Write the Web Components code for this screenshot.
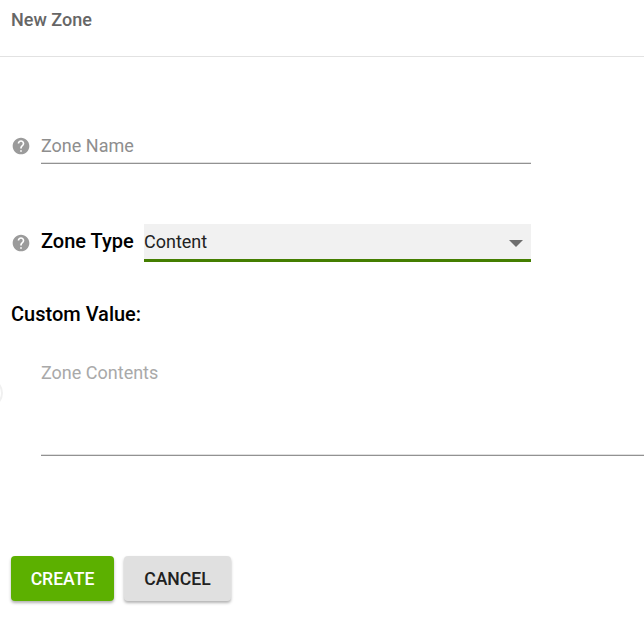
<!DOCTYPE html>
<html>
<head>
<meta charset="utf-8">
<title>New Zone</title>
<style>
    html, body { margin: 0; background: #fff; overflow: hidden; }
    body { font-family: Roboto, "Liberation Sans", sans-serif; }
</style>
</head>
<body>
<zone-dialog heading="New Zone"></zone-dialog>
<script>
class HelpIcon extends HTMLElement {
    constructor() {
        super();
        this.attachShadow({ mode: 'open' });
    }

    connectedCallback() {
        this.shadowRoot.innerHTML = `
        <style>
            :host { display: block; width: 20px; height: 20px; flex: none; }
            svg { display: block; width: 20px; height: 20px; fill: #9b9b9b; }
        </style>
        <svg viewBox="0 0 24 24"><path d="M12 2C6.48 2 2 6.48 2 12s4.48 10 10 10 10-4.48 10-10S17.52 2 12 2zm1 17h-2v-2h2v2zm2.07-7.75l-.9.92C13.45 12.9 13 13.5 13 15h-2v-.5c0-1.1.45-2.1 1.17-2.83l1.24-1.26c.37-.36.59-.86.59-1.41 0-1.1-.9-2-2-2s-2 .9-2 2H8c0-2.21 1.79-4 4-4s4 1.79 4 4c0 .88-.36 1.68-.93 2.25z"/></svg>
    `;
    }
}
customElements.define('help-icon', HelpIcon);

class TextField extends HTMLElement {
    constructor() {
        super();
        this.attachShadow({ mode: 'open' });
    }

    connectedCallback() {
        this.shadowRoot.innerHTML = `
        <style>
            :host { display: flex; align-items: center; gap: 10px; height: 36px; }
            .line {
                width: 490px;
                height: 35px;
                border-bottom: 1px solid #929292;
                box-shadow: inset 0 -1px 0 #e0e0e0;
                font-size: 18px;
                line-height: 35px;
                color: #8e8e8e;
            }
        </style>
        <help-icon></help-icon>
        <div class="line">${this.getAttribute('placeholder')}</div>
    `;
    }
}
customElements.define('text-field', TextField);

class SelectField extends HTMLElement {
    constructor() {
        super();
        this.attachShadow({ mode: 'open' });
    }

    connectedCallback() {
        this.shadowRoot.innerHTML = `
        <style>
            :host { display: flex; align-items: center; height: 38px; }
            help-icon { margin-right: 10px; }
            label { width: 103px; padding-bottom: 4px; font-size: 20px; font-weight: 500; color: #000; }
            .box {
                width: 387px;
                height: 35px;
                display: flex;
                align-items: center;
                justify-content: space-between;
                background: #f1f1f1;
                border-bottom: 3px solid #447e00;
                font-size: 18px;
                color: #222;
            }
            .arrow {
                width: 0;
                height: 0;
                margin: 4px 8px 0 0;
                border-left: 7px solid transparent;
                border-right: 7px solid transparent;
                border-top: 7px solid #6e6e6e;
            }
        </style>
        <help-icon></help-icon>
        <label>${this.getAttribute('label')}</label>
        <div class="box"><span>${this.getAttribute('value')}</span><span class="arrow"></span></div>
    `;
    }
}
customElements.define('select-field', SelectField);

class AreaField extends HTMLElement {
    constructor() {
        super();
        this.attachShadow({ mode: 'open' });
    }

    connectedCallback() {
        this.shadowRoot.innerHTML = `
        <style>
            :host { display: block; position: relative; padding-left: 41px; }
            .area {
                height: 100px;
                padding-top: 5px;
                border-bottom: 1px solid #929292;
                box-shadow: inset 0 -1px 0 #e0e0e0;
                font-size: 18px;
                line-height: 35px;
                color: #a9a9a9;
            }
            .edge {
                position: absolute;
                left: -27px;
                top: 28px;
                width: 26px;
                height: 26px;
                border: 2px solid #f0f0f0;
                border-radius: 50%;
            }
        </style>
        <div class="edge"></div>
        <div class="area">${this.getAttribute('placeholder')}</div>
    `;
    }
}
customElements.define('area-field', AreaField);

class ActionButton extends HTMLElement {
    constructor() {
        super();
        this.attachShadow({ mode: 'open' });
    }

    connectedCallback() {
        const primary = this.hasAttribute('primary');
        this.shadowRoot.innerHTML = `
        <style>
            :host { display: block; }
            button {
                display: block;
                width: ${primary ? '103px' : '107px'};
                height: 45px;
                padding: 0;
                border: 0;
                border-radius: 4px;
                background: ${primary ? '#5cb000' : '#e0e0e0'};
                color: ${primary ? '#fff' : '#212121'};
                font-family: inherit;
                font-size: 17.6px;
                font-weight: 500;
                box-shadow: 0 2px 3px rgba(0, 0, 0, 0.3);
            }
        </style>
        <button><slot></slot></button>
    `;
    }
}
customElements.define('action-button', ActionButton);

class ZoneDialog extends HTMLElement {
    constructor() {
        super();
        this.attachShadow({ mode: 'open' });
    }

    connectedCallback() {
        this.shadowRoot.innerHTML = `
        <style>
            :host { display: block; height: 627px; overflow: hidden; }
            header {
                height: 56px;
                box-sizing: content-box;
                padding-left: 11px;
                border-bottom: 1px solid #e2e2e2;
                font-size: 18px;
                font-weight: 500;
                line-height: 40px;
                color: #666;
            }
            text-field { margin: 71px 0 0 11px; }
            select-field { margin: 60px 0 0 11px; }
            h3 {
                margin: 40px 0 0 11px;
                font-size: 20px;
                font-weight: 500;
                line-height: 24px;
                color: #000;
            }
            area-field { margin-top: 24px; }
            footer { display: flex; gap: 10px; margin: 100px 0 0 11px; }
        </style>
        <header>${this.getAttribute('heading')}</header>
        <text-field placeholder="Zone Name"></text-field>
        <select-field label="Zone Type" value="Content"></select-field>
        <h3>Custom Value:</h3>
        <area-field placeholder="Zone Contents"></area-field>
        <footer>
            <action-button primary>CREATE</action-button>
            <action-button>CANCEL</action-button>
        </footer>
    `;
    }
}
customElements.define('zone-dialog', ZoneDialog);
</script>
</body>
</html>
